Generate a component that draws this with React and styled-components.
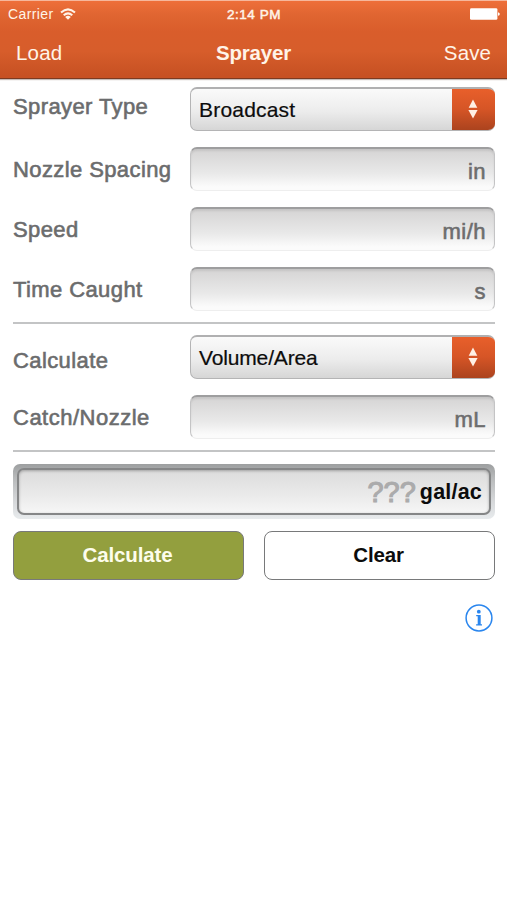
import React from 'react';
import styled, { createGlobalStyle } from 'styled-components';

const theme = {
  color: {
    orange: '#d95d2b',
    cream: '#fff4e8',
    green: '#939f3e',
    label: '#6b6c6d',
    line: '#c3c4c5',
    blue: '#2a86ee'
  }
};

const GlobalStyle = createGlobalStyle`
  * {
    box-sizing: border-box;
  }

  body {
    margin: 0;
    background: #fff;
    font-family: 'Liberation Sans', Arial, sans-serif;
  }
`;

const Screen = styled.div`
  width: 507px;
  height: 900px;
  background: #fff;
  overflow: hidden;
`;

const Header = styled.header`
  height: 79px;
  color: ${theme.color.cream};
  background: linear-gradient(#ee6f3a 0%, #e06531 18%, ${theme.color.orange} 40%, #d75d2b 65%, #c75123 96%);
  border-top: 1px solid #f6b79c;
  border-bottom: 1px solid #7d3a20;
  box-shadow: 0 1px 1px rgba(90, 60, 50, 0.35);
`;

const Bar = styled.div`
  display: grid;
  grid-template-columns: 1fr auto 1fr;
  align-items: center;
  height: ${({ $height }) => $height}px;
  padding: ${({ $padding }) => $padding};
`;

const Carrier = styled.div`
  display: flex;
  align-items: center;
  gap: 6px;
  font-size: 14px;
  letter-spacing: 0.4px;
`;

const Clock = styled.div`
  font-size: 13.5px;
  letter-spacing: 0.55px;
  -webkit-text-stroke: 0.5px;
`;

const Battery = styled.svg`
  justify-self: end;
`;

const NavButton = styled.a`
  justify-self: ${({ $end }) => ($end ? 'end' : 'start')};
  font-size: 20.5px;
  letter-spacing: ${({ $end }) => ($end ? 0.1 : 0.2)}px;
`;

const Title = styled.h1`
  margin: 0;
  font-size: 20.5px;
  font-weight: 700;
  letter-spacing: -0.2px;
`;

const Form = styled.main`
  padding: 8px 12px 0 13px;
`;

const Group = styled.section`
  display: flex;
  flex-direction: column;
  gap: 16px;
  padding: ${({ $padding }) => $padding};
  border-bottom: 2px solid ${theme.color.line};
`;

const Row = styled.div`
  display: grid;
  grid-template-columns: 177px 1fr;
  height: 44px;
`;

const Label = styled.label`
  padding-top: ${({ $top }) => $top || 10}px;
  line-height: 25px;
  font-size: 22px;
  letter-spacing: ${({ $spacing }) => $spacing || 0.4}px;
  color: ${theme.color.label};
  -webkit-text-stroke: 0.6px;
  white-space: nowrap;
`;

const Select = styled.div`
  display: flex;
  align-items: stretch;
  border: 1px solid #b4b4b5;
  border-top: 2px solid #b0b0b1;
  border-right: 0;
  border-radius: 7px;
  background: linear-gradient(#fafafa, #ececec 55%, #d6d6d6);
  overflow: hidden;
`;

const Value = styled.span`
  flex: 1;
  padding-left: 8px;
  line-height: 42px;
  font-size: 21px;
  letter-spacing: ${({ $spacing }) => $spacing || 0}px;
  color: #0c0c0c;
  -webkit-text-stroke: 0.2px;
`;

const Arrows = styled.span`
  display: flex;
  align-items: center;
  justify-content: center;
  width: 43px;
  margin-top: -1px;
  padding-right: 2px;
  background: linear-gradient(#e9602b, #d65526 50%, #ab431e);
`;

const Input = styled.div`
  display: flex;
  justify-content: flex-end;
  padding: 10px 8px 0 0;
  border: 1px solid #c4c4c5;
  border-top: 2px solid #9e9e9f;
  border-bottom-color: #eeeeee;
  border-radius: 7px;
  background: linear-gradient(#d5d4d4, #e9e9e9 60%, #fbfbfb 92%);
  box-shadow: inset 0 2px 2px rgba(0, 0, 0, 0.08);
  line-height: 25px;
  font-size: 22px;
  letter-spacing: 0.5px;
  color: #6d6d6e;
  -webkit-text-stroke: 0.6px;
`;

const Result = styled.div`
  height: 55px;
  margin-top: 12px;
  padding: 4px;
  border-radius: 7px;
  background: linear-gradient(#9d9fa0, #b7b9ba 25%, #d4d6d8 65%, #e8ebed);
`;

const ResultField = styled.div`
  display: flex;
  justify-content: flex-end;
  align-items: flex-start;
  gap: 4px;
  height: 47px;
  padding: 6px 7px 0 0;
  border: 2px solid #858687;
  border-radius: 7px;
  background: linear-gradient(#dcdcdc, #e9e9e9 55%, #f6f6f6);
  box-shadow: inset 0 1px 3px rgba(0, 0, 0, 0.28);
`;

const Unknown = styled.span`
  font-size: 29px;
  line-height: 32px;
  color: #ababac;
  -webkit-text-stroke: 1.1px;
`;

const ResultUnit = styled.span`
  font-size: 21.5px;
  line-height: 32px;
  font-weight: 700;
  letter-spacing: 0.2px;
  color: #0c0c0c;
`;

const Actions = styled.div`
  display: grid;
  grid-template-columns: 1fr 1fr;
  gap: 20px;
  margin-top: 12px;
`;

const Button = styled.button`
  height: 49px;
  padding: 0 2px 2px 0;
  border: 1.5px solid #78797a;
  border-radius: 8px;
  background: ${({ $primary }) => ($primary ? theme.color.green : '#fff')};
  color: ${({ $primary }) => ($primary ? '#fdfdec' : '#0c0c0c')};
  font: 700 20.5px 'Liberation Sans', Arial, sans-serif;
  letter-spacing: -0.15px;
`;

const Footer = styled.footer`
  display: flex;
  justify-content: flex-end;
  padding: 24px 2px 0 0;
`;

const SelectBox = ({ value, spacing }) => (
  <Select>
    <Value $spacing={spacing}>{value}</Value>
    <Arrows>
      <svg width="10" height="20" viewBox="0 0 10 20" fill="#fff0e4">
        <path d="M5 0.5 9.3 8.8H0.7z" />
        <path d="M0.4 11h9.2L5 19.5z" />
      </svg>
    </Arrows>
  </Select>
);

const InfoIcon = () => (
  <svg width="28" height="28" viewBox="0 0 28 28" fill={theme.color.blue}>
    <circle cx="14" cy="14" r="12.9" fill="none" stroke={theme.color.blue} strokeWidth="1.5" />
    <circle cx="13.8" cy="7.7" r="1.9" />
    <path d="M11.2 11h4.5v9.2h1.3v1.3h-5.9v-1.3h1.6v-7.9h-1.5z" />
  </svg>
);

const App = () => (
  <>
    <GlobalStyle />
    <Screen>
      <Header>
        <Bar $height={26} $padding="0 7px 0 8px">
          <Carrier>
            Carrier
            <svg width="16" height="12" viewBox="0 0 16 12" fill="none" stroke={theme.color.cream} strokeWidth="2">
              <path d="M1 4.6Q8-1.8 15 4.6" />
              <path d="M3.7 7.3Q8 3.5 12.3 7.3" />
              <path d="M8 11.8 5.2 9Q8 6.7 10.8 9z" fill={theme.color.cream} stroke="none" />
            </svg>
          </Carrier>
          <Clock>2:14 PM</Clock>
          <Battery width="30" height="12" viewBox="0 0 30 12" fill="#fff">
            <rect x="0" y="0.2" width="27.4" height="11.6" rx="1.4" />
            <path d="M28 4.2q1.8 0.4 1.8 1.8T28 7.8z" />
          </Battery>
        </Bar>
        <Bar $height={51} $padding="0 16px 0 16px">
          <NavButton>Load</NavButton>
          <Title>Sprayer</Title>
          <NavButton $end>Save</NavButton>
        </Bar>
      </Header>

      <Form>
        <Group $padding="0 0 11px">
          <Row>
            <Label $top={7}>Sprayer Type</Label>
            <SelectBox value="Broadcast" spacing={0.2} />
          </Row>
          <Row>
            <Label>Nozzle Spacing</Label>
            <Input>in</Input>
          </Row>
          <Row>
            <Label>Speed</Label>
            <Input>mi/h</Input>
          </Row>
          <Row>
            <Label>Time Caught</Label>
            <Input>s</Input>
          </Row>
        </Group>

        <Group $padding="11px 0 11px">
          <Row>
            <Label $top={13}>Calculate</Label>
            <SelectBox value="Volume/Area" spacing={-0.15} />
          </Row>
          <Row>
            <Label $spacing={0.5}>Catch/Nozzle</Label>
            <Input>mL</Input>
          </Row>
        </Group>

        <Result>
          <ResultField>
            <Unknown>???</Unknown>
            <ResultUnit>gal/ac</ResultUnit>
          </ResultField>
        </Result>

        <Actions>
          <Button $primary>Calculate</Button>
          <Button>Clear</Button>
        </Actions>

        <Footer>
          <InfoIcon />
        </Footer>
      </Form>
    </Screen>
  </>
);

export default App;
